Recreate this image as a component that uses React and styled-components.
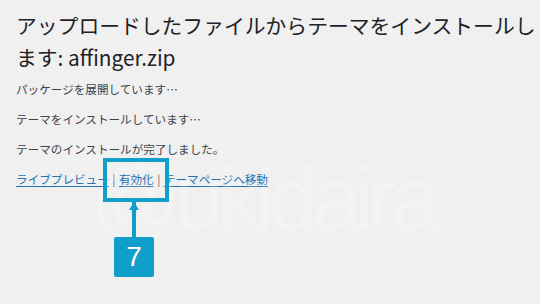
import React from "react";
import styled, { createGlobalStyle } from "styled-components";

const GlobalStyle = createGlobalStyle`
  html, body {
    margin: 0;
    padding: 0;
    background: #f0f0f0;
  }
`;

const Page = styled.div`
  position: relative;
  width: 540px;
  height: 304px;
  overflow: hidden;
  background: #f0f0f0;
  padding: 9px 0 0 16px;
  box-sizing: border-box;
  font-family: "Noto Sans CJK JP", "Noto Sans", sans-serif;
  color: #3c434a;
`;

const Title = styled.h1`
  margin: 0;
  width: 522px;
  font-size: 20.8px;
  line-height: 32px;
  font-weight: 400;
  color: #1d2327;
  line-break: anywhere;
`;

const Log = styled.div`
  display: flex;
  flex-direction: column;
  gap: 12px;
  margin-top: 7px;
`;

const Line = styled.p`
  margin: 0;
  font-size: 11.6px;
  line-height: 18px;
`;

const Link = styled.a`
  color: #2271b1;
  text-decoration: underline;
  text-underline-offset: 2px;
  cursor: pointer;
`;

const Sep = styled.span`
  color: #6d6a60;
  margin: 0 3.5px;
`;

const Watermark = styled.div`
  position: absolute;
  left: 90px;
  top: 154px;
  font-family: "Liberation Sans", Arial, sans-serif;
  font-size: 90px;
  line-height: 1;
  letter-spacing: -7px;
  color: rgba(255, 255, 255, 0.2);
  pointer-events: none;
  white-space: nowrap;
`;

const Callout = styled.div`
  position: absolute;
  left: 103px;
  top: 158px;
  width: 66px;
  display: flex;
  flex-direction: column;
  align-items: center;
`;

const Frame = styled.div`
  width: 66px;
  height: 44px;
  border: 4px solid ${(p) => p.$color};
  box-sizing: border-box;
`;

const Pointer = styled.div`
  display: flex;
  flex-direction: column;
  align-items: center;
  margin-right: 4px;
`;

const Stem = styled.div`
  position: relative;
  width: 4px;
  height: 35px;
  background: ${(p) => p.$color};

  &::before {
    content: "";
    position: absolute;
    top: 0;
    left: -3px;
    border-left: 5px solid transparent;
    border-right: 5px solid transparent;
    border-bottom: 8px solid ${(p) => p.$color};
  }
`;

const Badge = styled.div`
  width: 40px;
  height: 40px;
  border-radius: 2px;
  background: ${(p) => p.$color};
  color: #fff;
  display: flex;
  align-items: center;
  justify-content: center;
  font-family: "Liberation Sans", Arial, sans-serif;
  font-size: 28px;
`;

const ACCENT = "#109ecb";

export default function App() {
  return (
    <>
      <GlobalStyle />
      <Page>
        <Title>アップロードしたファイルからテーマをインストールします: affinger.zip</Title>
        <Log>
          <Line>パッケージを展開しています…</Line>
          <Line>テーマをインストールしています…</Line>
          <Line>テーマのインストールが完了しました。</Line>
          <Line>
            <Link>ライブプレビュー</Link>
            <Sep>|</Sep>
            <Link>有効化</Link>
            <Sep>|</Sep>
            <Link>テーマページへ移動</Link>
          </Line>
        </Log>
        <Watermark>@ukidaira</Watermark>
        <Callout>
          <Frame $color={ACCENT} />
          <Pointer>
            <Stem $color={ACCENT} />
            <Badge $color={ACCENT}>7</Badge>
          </Pointer>
        </Callout>
      </Page>
    </>
  );
}
